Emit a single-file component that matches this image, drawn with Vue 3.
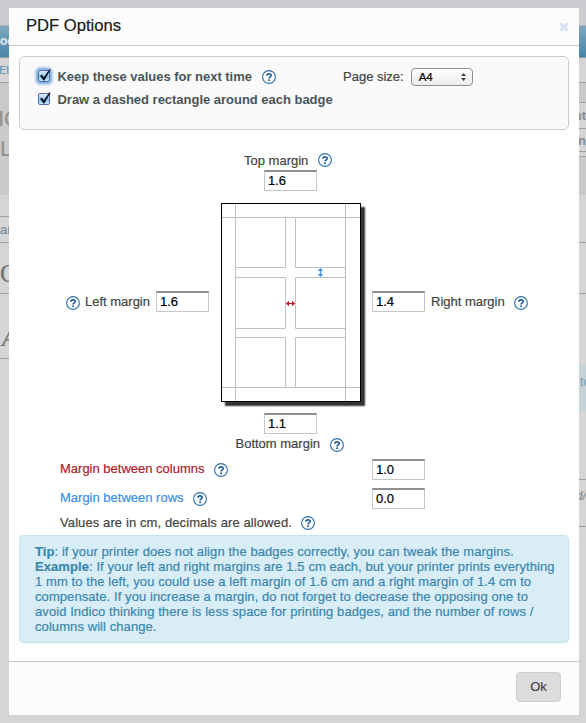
<script setup>
import { h } from 'vue'

// Small round "?" marker shown beside each option
const HelpIcon = () =>
  h('svg', { width: 14, height: 14, viewBox: '0 0 14 14', style: 'display:block;flex:none' }, [
    h('circle', { cx: 7, cy: 7, r: 6.4, fill: '#fbfdff', stroke: '#2f6ea8', 'stroke-width': 1.1 }),
    h('path', { d: 'M4.9 5.7C4.9 3.2 9.2 3.2 9.2 5.5C9.2 6.9 7.1 6.9 7.1 8.5', fill: 'none', stroke: '#28639b', 'stroke-width': 1.7 }),
    h('rect', { x: 6.2, y: 9.4, width: 1.8, height: 1.7, fill: '#28639b' })
  ])

const checks = [
  { label: 'Keep these values for next time', focused: true },
  { label: 'Draw a dashed rectangle around each badge', focused: false }
]

const leftStrip = [
  { h: 26, c: 'top' },
  { h: 32, c: 'nav', t: 'oo' },
  { h: 25, c: 'light line link', t: 'EI' },
  { h: 51, c: 'dark big low', t: 'IC' },
  { h: 61, c: 'dark big', t: 'L' },
  { h: 22, c: 'light line' },
  { h: 26, c: 'light line crumb', t: 'ar' },
  { h: 51, c: 'light line serif', t: 'C' },
  { h: 65, c: 'light line serif italic', t: 'A' },
  { h: 364, c: 'light' }
]

const rightStrip = [
  { h: 26, c: 'top' },
  { h: 32, c: 'nav' },
  { h: 25, c: 'light line' },
  { h: 20, c: 'dark line' },
  { h: 26, c: 'light line tab', t: 'nt' },
  { h: 23, c: 'light line tab', t: 'on' },
  { h: 5, c: 'light line' },
  { h: 38, c: 'dark' },
  { h: 48, c: 'light line' },
  { h: 51, c: 'light line' },
  { h: 71, c: 'light' },
  { h: 46, c: 'info', t: 'tc' },
  { h: 69, c: 'light line' },
  { h: 47, c: 'light line path', t: 'd/' },
  { h: 196, c: 'light' }
]
</script>

<template>
  <div class="screen">
    <div class="strip left">
      <div v-for="(s, i) in leftStrip" :key="i" class="seg" :class="s.c" :style="{ height: s.h + 'px' }">{{ s.t }}</div>
    </div>

    <section class="dialog">
      <header class="head">
        <h1>PDF Options</h1>
        <svg class="close" width="10" height="10" viewBox="0 0 10 10">
          <path d="M1.4 1.4L8.6 8.6M8.6 1.4L1.4 8.6" stroke="#d9e3f4" stroke-width="3.2" />
        </svg>
      </header>

      <div class="options">
        <div class="checks">
          <div v-for="c in checks" :key="c.label" class="check">
            <span class="box" :class="{ focused: c.focused }">
              <svg width="16" height="16" viewBox="0 0 16 16">
                <path d="M3 7.8L5 6.8L6.8 9.3L12.2 1.5L13.7 1.5L7.4 12.5L6.4 12.5Z" fill="#07132b" />
              </svg>
            </span>
            <b>{{ c.label }}</b>
            <HelpIcon v-if="c.focused" class="check-help" />
          </div>
        </div>
        <div class="size">
          <span>Page size:</span>
          <div class="select">
            A4
            <svg width="5" height="8" viewBox="0 0 5 8"><path d="M0 3L2.5 0L5 3ZM0 5L2.5 8L5 5Z" fill="#444" /></svg>
          </div>
        </div>
      </div>

      <div class="edge top-label"><span>Top margin</span><HelpIcon /></div>
      <div class="field centered">1.6</div>

      <div class="middle">
        <div class="side before">
          <HelpIcon class="drop" /><span>Left margin</span><div class="field">1.6</div>
        </div>
        <svg class="page" width="140" height="199" viewBox="0 0 140 199">
          <rect x=".5" y=".5" width="139" height="198" fill="#fff" stroke="#000" />
          <g fill="none" stroke="#c0c0c0">
            <path d="M14.5 1V198M124.5 1V198M1 14.5H139M1 184.5H139" />
            <path d="M64.5 14V64.5H14M74.5 14V64.5H125" />
            <path d="M14 74.5H64.5V125.5H14M125 74.5H74.5V125.5H125" />
            <path d="M14 134.5H64.5V184M125 134.5H74.5V184" />
          </g>
          <path d="M99.5 67V72" stroke="#3b8fe6" stroke-width="1.2" />
          <path d="M96.8 68L99.5 64.9L102.2 68ZM96.8 71L99.5 74.1L102.2 71Z" fill="#3b8fe6" />
          <path d="M67 100.5H72" stroke="#b02228" stroke-width="1.2" />
          <path d="M68 97.8L64.9 100.5L68 103.2ZM71 97.8L74.1 100.5L71 103.2Z" fill="#b02228" />
        </svg>
        <div class="side after">
          <div class="field">1.4</div><span>Right margin</span><HelpIcon class="drop" />
        </div>
      </div>

      <div class="field centered bottom">1.1</div>
      <div class="edge bottom-label"><span>Bottom margin</span><HelpIcon class="drop" /></div>

      <div class="gaps">
        <div class="gap-row red">
          <span>Margin between columns</span><HelpIcon /><div class="field">1.0</div>
        </div>
        <div class="gap-row blue">
          <span>Margin between rows</span><HelpIcon /><div class="field">0.0</div>
        </div>
        <div class="gap-row note"><span>Values are in cm, decimals are allowed.</span><HelpIcon /></div>
      </div>

      <div class="tip">
        <b>Tip</b>: if your printer does not align the badges correctly, you can tweak the margins.<br />
        <b>Example</b>: If your left and right margins are 1.5 cm each, but your printer prints everything<br />
        1 mm to the left, you could use a left margin of 1.6 cm and a right margin of 1.4 cm to<br />
        compensate. If you increase a margin, do not forget to decrease the opposing one to<br />
        avoid Indico thinking there is less space for printing badges, and the number of rows /<br />
        columns will change.
      </div>

      <footer class="foot"><button type="button">Ok</button></footer>
    </section>

    <div class="strip right">
      <div v-for="(s, i) in rightStrip" :key="i" class="seg" :class="s.c" :style="{ height: s.h + 'px' }">{{ s.t }}</div>
    </div>
  </div>
</template>

<style>
body { margin: 0; }
</style>

<style scoped>
* { box-sizing: border-box; }
.screen {
  display: grid;
  grid-template-columns: 9px 570px 7px;
  width: 586px;
  height: 723px;
  overflow: hidden;
  background: linear-gradient(#cdcdd1 26px, #d5d5d5 26px);
  font: 13px/15px "Liberation Sans", Arial, sans-serif;
  color: #444;
  -webkit-text-stroke: .2px;
}
.strip { overflow: hidden; height: 723px; }
.seg { display: flex; align-items: center; overflow: hidden; white-space: nowrap; color: #8d8d8d; }
.right .seg { justify-content: flex-end; }
.top { background: #cdcdd1; border-bottom: 1px solid #adb2b6; }
.nav { background: linear-gradient(#7fa6bd, #4686ab); border-bottom: 1px solid #8d9ba4; color: #dce5e9; font-weight: bold; font-size: 12px; }
.light { background: #d5d5d5; }
.dark { background: #cacaca; }
.line { border-bottom: 1px solid #a0a0a0; }
.link { color: #6497b6; font-family: "DejaVu Sans", sans-serif; font-size: 11px; text-indent: -1px; }
.big { font-size: 22px; color: #929292; }
.left .big { align-items: flex-start; padding: 2px 0 0; line-height: 26px; }
.left .low { align-items: flex-end; padding: 0 0 2px; text-indent: -2px; }
.crumb { color: #758b9c; }
.serif { font: 25px "Liberation Serif", serif; color: #707070; padding-top: 12px; }
.italic { font-style: italic; padding: 24px 0 0 2px; }
.tab { font-weight: bold; }
.right .info { align-items: flex-start; justify-content: flex-start; padding: 9px 0 0 1px; background: #c5d3d8; color: #80a3b1; }
.right .path { align-items: flex-start; padding-top: 8px; font-style: italic; }

.dialog {
  display: flex;
  flex-direction: column;
  margin: 8px 0;
  height: 707px;
  background: #fff;
}
.head {
  display: flex;
  justify-content: space-between;
  align-items: center;
  height: 38px;
  padding: 0 10px 1px 17px;
  background: #fcfcfc;
  border-bottom: 1px solid #c8c8c8;
}
.head h1 { margin: 0; font-size: 16.6px; line-height: 20px; font-weight: normal; color: #1a1a1a; }
.close { margin-top: 2px; }
.options {
  display: flex;
  height: 74px;
  margin: 10px 10px 0;
  border: 1px solid #c4cfd0;
  border-radius: 5px;
  background: #fafafa;
}
.checks { width: 323px; padding-top: 8px; }
.check { display: flex; align-items: center; height: 23px; padding-left: 18px; white-space: nowrap; }
.check b { margin-left: 7.5px; color: #4a5558; letter-spacing: -.02px; -webkit-text-stroke: 0; }
.check-help { margin: 1px 0 0 10px; }
.box {
  flex: none;
  width: 12px;
  height: 12px;
  margin-top: -1px;
  border: 1px solid #5a6cae;
  border-radius: 2px;
  background: linear-gradient(#dcecfb, #8cc4f0 60%, #c4ecff);
}
.box svg { display: block; margin: -3px 0 0 -2px; }
.focused { box-shadow: 0 0 3px 2px #6ea5da; }
.size { display: flex; gap: 7px; height: 18px; margin-top: 11px; line-height: 18px; }
.select {
  display: flex;
  align-items: center;
  justify-content: space-between;
  width: 62px;
  height: 18px;
  padding: 0 6px 0 7px;
  border: 1px solid #8f8f8f;
  border-radius: 4px;
  background: linear-gradient(#fff, #ececec);
  color: #000;
  font-size: 11.5px;
}
.field {
  flex: none;
  width: 53px;
  height: 21px;
  padding: 0 0 0 3px;
  border: 1px solid #c6c6c6;
  border-top: 2px solid #8e8e8e;
  background: #fff;
  color: #000;
  line-height: 18px;
}
.edge { display: flex; align-items: center; white-space: nowrap; }
.top-label { height: 20px; margin: 20px 0 0 235px; gap: 10px; }
.centered { margin-left: 255px; }
.middle { display: grid; grid-template-columns: 212px 140px 218px; height: 199px; margin-top: 12px; }
.page { display: block; box-shadow: 4px 4px 1.5px #333; }
.side { display: flex; align-items: center; padding-bottom: 2px; white-space: nowrap; }
.before { justify-content: flex-end; padding-right: 12px; gap: 5px; }
.before span { margin-right: 1px; }
.after { padding-left: 11px; gap: 6px; }
.after .drop { margin-left: 3px; }
.drop { margin-top: 2px; }
.bottom { margin-top: 11px; }
.bottom-label { height: 20px; margin-left: 226.5px; gap: 9.5px; }
.bottom-label span { margin-top: -1px; }
.gaps { padding: 5px 0 0 51px; }
.gap-row { display: flex; align-items: center; gap: 9px; height: 21px; margin-bottom: 8px; white-space: nowrap; }
.gap-row .field { margin-left: auto; margin-right: 154px; }
.gap-row span { margin-top: -2px; }
.red { color: #b02228; }
.blue { color: #3b8fe6; }
.note { height: 18px; margin: -3px 0 3px; letter-spacing: .1px; }
.tip {
  height: 108px;
  margin: 0 10px;
  padding: 8px 0 0 15px;
  border: 1px solid #bce8f1;
  border-radius: 4px;
  background: #d9edf7;
  color: #3a87ad;
  letter-spacing: .08px;
  white-space: nowrap;
}
.foot {
  display: flex;
  justify-content: flex-end;
  align-items: flex-start;
  height: 54px;
  margin-top: auto;
  padding: 10px 18px 0 0;
  border-top: 1px solid #c8c8c8;
  background: #fcfcfc;
}
.foot button {
  width: 45px;
  height: 30px;
  padding: 0 0 2px;
  border: 1px solid #d0d0d0;
  border-radius: 4px;
  background: #dcdcdc;
  color: #444;
  font: 13px "Liberation Sans", Arial, sans-serif;
}
</style>
